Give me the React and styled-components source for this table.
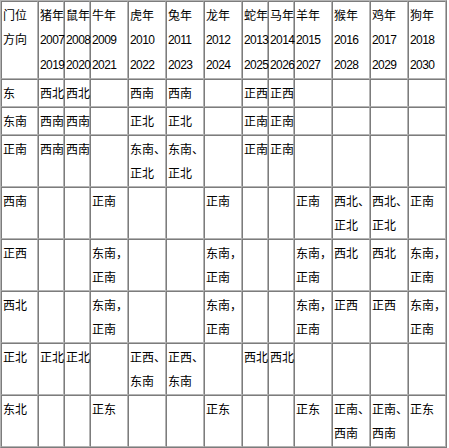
import React from 'react';
import styled, { createGlobalStyle } from 'styled-components';

const GlobalStyle = createGlobalStyle`
  html, body {
    margin: 0;
    padding: 0;
    background: #fff;
  }
`;

const Table = styled.table`
  table-layout: fixed;
  width: 447px;
  border-collapse: separate;
  border-spacing: 0;
  border: 1px solid;
  border-color: #b4b4b4 #7c7c7c #7c7c7c #b4b4b4;
  font-family: "Noto Sans CJK SC", "Liberation Sans", sans-serif;
  font-size: 12px;
  line-height: 24px;
  color: #000;
`;

const Col = styled.col`
  width: ${props => (props.narrow ? 26 : props.first ? 37 : 38)}px;
`;

const Cell = styled.td`
  vertical-align: top;
  text-align: left;
  padding: 1px;
  white-space: nowrap;
  overflow: visible;
  border: 1px solid;
  border-color: #7c7c7c #b4b4b4 #b4b4b4 #7c7c7c;
`;

const Year = styled.span`
  font-family: "Liberation Sans", sans-serif;
  letter-spacing: -0.6px;
`;

const years = [
  ['猪年', '2007', '2019'],
  ['鼠年', '2008', '2020'],
  ['牛年', '2009', '2021'],
  ['虎年', '2010', '2022'],
  ['兔年', '2011', '2023'],
  ['龙年', '2012', '2024'],
  ['蛇年', '2013', '2025'],
  ['马年', '2014', '2026'],
  ['羊年', '2015', '2027'],
  ['猴年', '2016', '2028'],
  ['鸡年', '2017', '2029'],
  ['狗年', '2018', '2030'],
];

const narrowCols = [1, 2, 7, 8];

const rows = [
  ['东', '西北', '西北', '', '西南', '西南', '', '正西', '正西', '', '', '', ''],
  ['东南', '西南', '西南', '', '正北', '正北', '', '正南', '正南', '', '', '', ''],
  ['正南', '西南', '西南', '', ['东南、', '正北'], ['东南、', '正北'], '', '正南', '正南', '', '', '', ''],
  ['西南', '', '', '正南', '', '', '正南', '', '', '正南', ['西北、', '正北'], ['西北、', '正北'], '正南'],
  ['正西', '', '', ['东南，', '正南'], '', '', ['东南，', '正南'], '', '', ['东南，', '正南'], '西北', '西北', ['东南，', '正南']],
  ['西北', '', '', ['东南，', '正南'], '', '', ['东南，', '正南'], '', '', ['东南，', '正南'], '正西', '正西', ['东南，', '正南']],
  ['正北', '正北', '正北', '', ['正西、', '东南'], ['正西、', '东南'], '', '西北', '西北', '', '', '', ''],
  ['东北', '', '', '正东', '', '', '正东', '', '', '正东', ['正南、', '西南'], ['正南、', '西南'], '正东'],
];

const Lines = ({ value }) => {
  if (Array.isArray(value)) {
    return value.map((v, i) => (
      <React.Fragment key={i}>
        {i > 0 && <br />}
        {v}
      </React.Fragment>
    ));
  }
  return value || null;
};

export default function App() {
  return (
    <>
      <GlobalStyle />
      <Table>
        <colgroup>
          <Col first />
          {years.map((y, i) => (
            <Col key={y[0]} narrow={narrowCols.includes(i + 1)} />
          ))}
        </colgroup>
        <tbody>
          <tr>
            <Cell>门位<br />方向</Cell>
            {years.map(([name, a, b]) => (
              <Cell key={name}>
                {name}<br /><Year>{a}</Year><br /><Year>{b}</Year>
              </Cell>
            ))}
          </tr>
          {rows.map(row => (
            <tr key={row[0]}>
              {row.map((v, i) => (
                <Cell key={i}><Lines value={v} /></Cell>
              ))}
            </tr>
          ))}
        </tbody>
      </Table>
    </>
  );
}
